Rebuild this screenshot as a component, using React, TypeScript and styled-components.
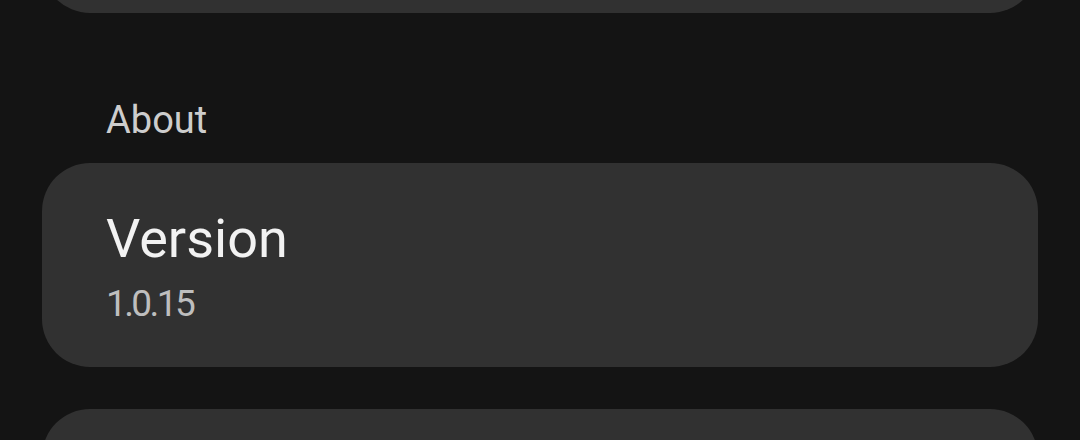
import React from "react";
import styled, { createGlobalStyle } from "styled-components";

const Global = createGlobalStyle`
  html, body {
    margin: 0;
    padding: 0;
    background: #141414;
    font-family: Roboto, "Noto Sans", sans-serif;
    overflow: hidden;
  }
`;

const Page = styled.div`
  width: 1080px;
  height: 440px;
  overflow: hidden;
  background: #141414;
  box-sizing: border-box;
  padding: 0 42px;
  display: flex;
  flex-direction: column;
`;

const Card = styled.div<{ $clipTop?: number }>`
  background: #313131;
  border-radius: 48px;
  box-sizing: border-box;
  padding: 44px 64px 41px;
  display: flex;
  flex-direction: column;
  gap: 11px;
  flex-shrink: 0;
  margin-top: ${(p) => (p.$clipTop ? `-${p.$clipTop}px` : "0")};
`;

const SectionLabel = styled.div`
  font-size: 38px;
  line-height: 46px;
  color: #cdcdcd;
  padding: 84px 64px 20px;
`;

const Title = styled.div`
  font-size: 54px;
  line-height: 64px;
  color: #f2f2f2;
`;

const Sub = styled.div`
  font-size: 37px;
  line-height: 44px;
  color: #bebebe;
  letter-spacing: -2.6px;
`;

const Spacer = styled.div`
  height: 42px;
  flex-shrink: 0;
`;

const PlaceholderCard = styled(Card)`
  height: 204px;
`;

export default function App() {
  return (
    <>
      <Global />
      <Page>
        <PlaceholderCard $clipTop={191} />
        <SectionLabel>About</SectionLabel>
        <Card>
          <Title>Version</Title>
          <Sub>1.0.15</Sub>
        </Card>
        <Spacer />
        <PlaceholderCard />
      </Page>
    </>
  );
}
